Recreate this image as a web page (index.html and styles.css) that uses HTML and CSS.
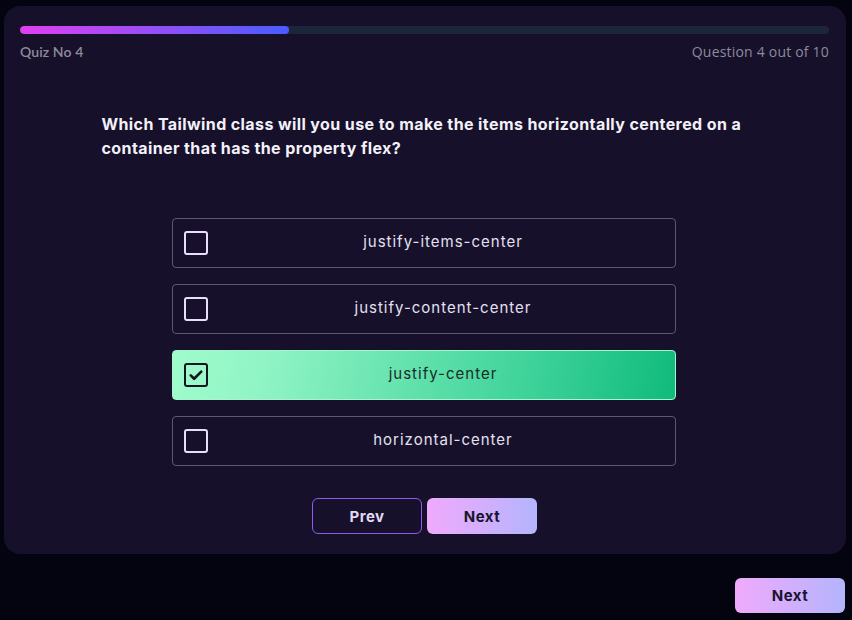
FILE: index.html
```html
<!DOCTYPE html>
<html>
<head>
<meta charset="utf-8">
<link rel="stylesheet" href="styles.css">
</head>
<body>
<div class="page">
  <div class="card">
    <div class="progress"><div class="progress-fill" style="width:33.3%"></div></div>
    <div class="meta">
      <span class="quiz-no">Quiz No 4</span>
      <span class="q-count">Question 4 out of 10</span>
    </div>
    <div class="content">
      <p class="question">Which Tailwind class will you use to make the items horizontally centered on a container that has the property flex?</p>
      <div class="options">
        <div class="option">
          <span class="box"></span>
          <span class="label">justify-items-center</span>
        </div>
        <div class="option">
          <span class="box"></span>
          <span class="label">justify-content-center</span>
        </div>
        <div class="option selected">
          <span class="box checked">
            <svg viewBox="0 0 24 24" width="18" height="18"><path d="M5 12.5l4.5 4.5L19 7.5" fill="none" stroke="#14151f" stroke-width="3.5" stroke-linecap="round" stroke-linejoin="round"/></svg>
          </span>
          <span class="label">justify-center</span>
        </div>
        <div class="option">
          <span class="box"></span>
          <span class="label">horizontal-center</span>
        </div>
      </div>
      <div class="nav">
        <button class="btn btn-outline">Prev</button>
        <button class="btn btn-grad">Next</button>
      </div>
    </div>
  </div>
  <div class="footer">
    <button class="btn btn-grad">Next</button>
  </div>
</div>
</body>
</html>
```
FILE: styles.css
```css
* { box-sizing: border-box; }
html, body { margin: 0; padding: 0; background: #03040f; }
body { font-family: Inter, "Noto Sans", sans-serif; color: #ece8f6; }
.page { padding: 6px 6px 0 4px; }
.card {
  background: #16102b;
  border-radius: 16px;
  padding: 20px 17px 20px 16px;
}
.progress {
  height: 8px;
  border-radius: 4px;
  background: #1d2638;
  overflow: hidden;
}
.progress-fill {
  height: 100%;
  border-radius: 4px;
  background: linear-gradient(90deg, #e040f0, #4a5cff);
}
.meta {
  display: flex;
  justify-content: space-between;
  margin-top: 8px;
  line-height: 20px;
  font-size: 14px;
  color: #8d8a9c;
}
.quiz-no { font-family: Lato, sans-serif; font-weight: 600; letter-spacing: 0.1px; }
.q-count { font-family: "Open Sans", sans-serif; letter-spacing: 0.2px; }
.content {
  width: 648px;
  margin: 50px auto 0;
  position: relative;
  left: 1px;
}
.question {
  margin: 0;
  font-size: 16px;
  line-height: 24px;
  font-weight: 700;
  color: #f3f1f8;
  letter-spacing: 0.4px;
}
.options {
  width: 504px;
  margin: 58px 0 0 70px;
  display: flex;
  flex-direction: column;
  gap: 16px;
}
.option {
  height: 50px;
  border: 1px solid #5e5874;
  border-radius: 4px;
  display: flex;
  align-items: center;
  padding: 0 12px 0 11px;
}
.option .box {
  width: 24px;
  height: 24px;
  border: 2px solid #eadcff;
  border-radius: 3px;
  flex: none;
  display: flex;
  align-items: center;
  justify-content: center;
}
.option .label {
  flex: 1;
  text-align: center;
  font-size: 15px;
  color: #e4e0f0;
  letter-spacing: 1px;
  margin-left: 16px;
  padding-bottom: 3px;
}
.option.selected {
  border-color: #a7f5cf;
  background: linear-gradient(100deg, #a0fccc 0%, #8ef3c4 20%, #3fd39a 70%, #10bb7c 100%);
}
.option.selected .label { color: #1b2a24; }
.option .box.checked {
  border: 2.5px solid #14151f;
  background: transparent;
}
.nav {
  display: flex;
  justify-content: center;
  gap: 5px;
  margin-top: 32px;
  position: relative;
  left: -1px;
}
.btn {
  width: 110px;
  height: 36px;
  border-radius: 6px;
  font-family: Inter, sans-serif;
  font-weight: 700;
  font-size: 15px;
  letter-spacing: 0.5px;
  cursor: pointer;
}
.btn-outline {
  background: transparent;
  border: 1px solid #8e5cf0;
  color: #e0daf2;
}
.btn-grad {
  border: none;
  background: linear-gradient(90deg, #f0aafc, #b4b4fd);
  color: #1a1530;
}
.footer {
  display: flex;
  justify-content: flex-end;
  margin-top: 24px;
  padding-right: 1px;
}
.footer .btn { height: 35px; }
```
